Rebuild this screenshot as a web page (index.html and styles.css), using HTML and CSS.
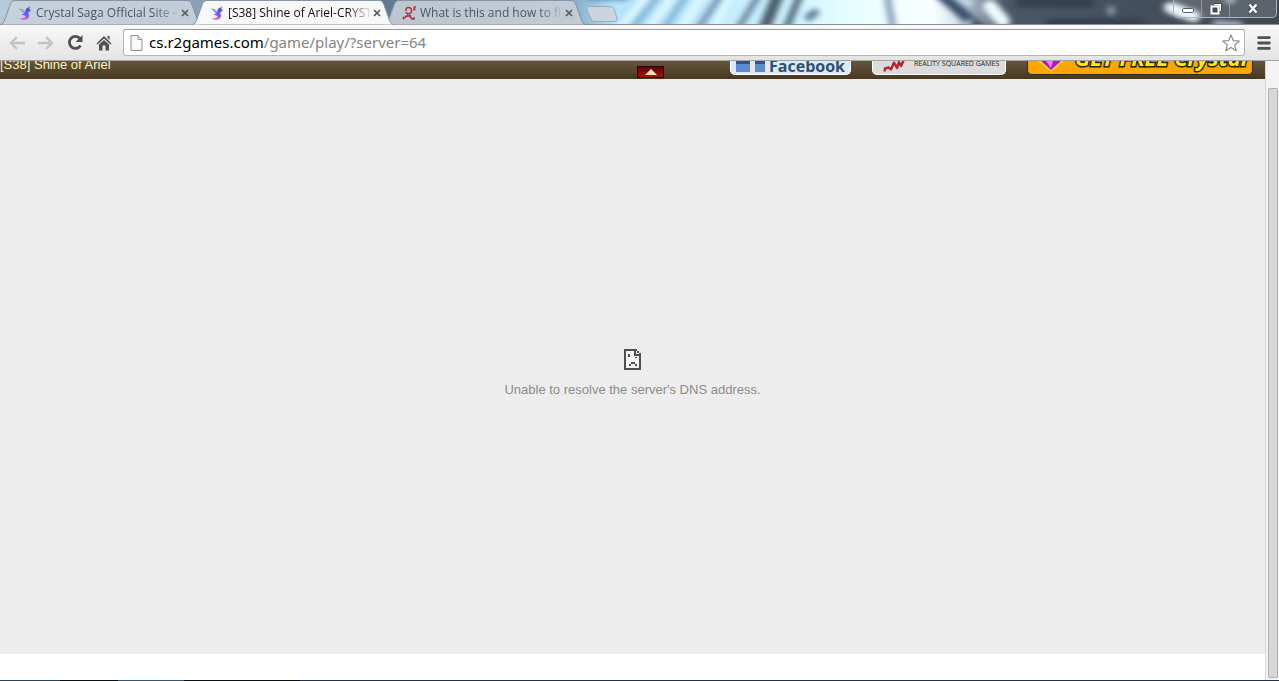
FILE: index.html
```html
<!DOCTYPE html>
<html lang="en">
<head>
<meta charset="utf-8">
<title>[S38] Shine of Ariel-CRYSTAL SAGA</title>
<link rel="stylesheet" href="styles.css">
</head>
<body>
<svg class="defs" width="0" height="0" aria-hidden="true">
  <defs>
    <linearGradient id="wing" x1="0" y1="0" x2="0" y2="1"><stop offset="0" stop-color="#4a45b4"/><stop offset=".5" stop-color="#5a5ff0"/><stop offset="1" stop-color="#d850d8"/></linearGradient>
    <symbol id="saga" viewBox="0 0 14 14"><path fill="#8fa0e0" d="M1 2L5 3.500L8 6L6 7.500L3 5Z"/><path fill="url(#wing)" d="M12.500 0L11 3L13 4L11 6L10 7.500C12.500 9.500 11 13 7 13.500C5 14 3 13.500 1.500 12.500C5 12.500 8 12 7.500 10.500C7 9 4.500 9.500 3 8C5 8.500 6 7.500 7 6.500L8 3C9 2 11 1.500 12.500 0Z"/></symbol>
    <symbol id="cross" viewBox="0 0 8 8"><path d="M1 1L7 7M7 1L1 7" stroke="#5a5a5a" stroke-width="1.7" fill="none"/></symbol>
    <symbol id="tabshape" viewBox="0 0 202 25" preserveAspectRatio="none"><path d="M0 24.500C3 24.500 4 22 5 19L10 5C11 2 12 .5 15 .5H187C190 .5 191 2 192 5L197 19C198 22 199 24.500 202 24.500"/></symbol>
  </defs>
</svg>
<header class="titlebar">
  <svg class="wallpaper" viewBox="0 0 1279 25" preserveAspectRatio="none" aria-hidden="true">
    <defs>
      <linearGradient id="sky" x1="0" x2="1"><stop offset="0" stop-color="#b9cad8"/><stop offset=".15" stop-color="#8aa2b8"/><stop offset=".3" stop-color="#617890"/><stop offset=".45" stop-color="#87b0cd"/><stop offset=".48" stop-color="#b4e2fa"/><stop offset=".62" stop-color="#d0f4ff"/><stop offset=".66" stop-color="#e4fdff"/><stop offset=".73" stop-color="#fafeff"/><stop offset=".745" stop-color="#dbe9f3"/><stop offset=".785" stop-color="#4a5869"/><stop offset="1" stop-color="#3f4752"/></linearGradient>
    </defs>
    <rect width="1279" height="25" fill="url(#sky)"/>
    <g class="streaks" fill="none">
      <path d="M590 -4H625" stroke="#5a82a8" stroke-width="8"/>
      <path d="M630 33L661 -8M662 33L690 -10" stroke="#7fb0d4" stroke-width="6"/>
      <path d="M617 33L650 -8M646 33L676 -8M680 33L704 -10M712 33L732 -10" stroke="#e2fbff" stroke-width="6"/>
      <path d="M696 33L724 -10" stroke="#7090ac" stroke-width="6"/>
      <path d="M736 33L762 -10" stroke="#647f96" stroke-width="6"/>
      <path d="M762 35L780 -10" stroke="#4b5f6e" stroke-width="12"/>
      <path d="M784 35L802 -10" stroke="#4d6577" stroke-width="7"/>
      <path d="M809 18L815 13" stroke="#5d7f96" stroke-width="8"/>
      <path d="M894 35L886 -10" stroke="#7594af" stroke-width="6"/>
      <path d="M936 -10L985 34" stroke="#3a4f6a" stroke-width="11"/>
      <path d="M965 1L969 3" stroke="#c9e7fc" stroke-width="5"/>
      <path d="M990 7L1003 22" stroke="#eefaff" stroke-width="14"/>
      <path d="M964 30L970 22" stroke="#b5d4e9" stroke-width="5"/>
      <path d="M1020 3H1090M1050 24H1140" stroke="#353f4c" stroke-width="9"/>
      <path d="M1111 9V13" stroke="#8fa8b9" stroke-width="6"/>
      <path d="M1170 8L1194 17" stroke="#eef7ff" stroke-width="12"/>
      <path d="M1216 24L1240 26M1228 0H1232" stroke="#afc1d2" stroke-width="6"/>
    </g>
  </svg>
  <nav class="tabs" aria-label="Tabs">
    <div class="tab"><svg class="shape"><use href="#tabshape"/></svg><svg class="fav"><use href="#saga"/></svg><span class="name">Crystal Saga Official Site –</span><button class="close" aria-label="Close tab"><svg><use href="#cross"/></svg></button></div>
    <div class="tab current"><svg class="shape"><use href="#tabshape"/></svg><svg class="fav"><use href="#saga"/></svg><span class="name">[S38] Shine of Ariel-CRYST</span><button class="close" aria-label="Close tab"><svg><use href="#cross"/></svg></button></div>
    <div class="tab third"><svg class="shape"><use href="#tabshape"/></svg><svg class="fav" viewBox="0 0 14 14"><path d="M4 5C3 1 9 0 9.500 4C10 8 5 9 4 6M6 9L3 11.500H1.500V13.500M3 10.500L9 9.500M7 9L10 13H12V11M11.500 1H13L12 3.500H13.500" fill="none" stroke="#b52b3a" stroke-width="1.500"/></svg><span class="name">What is this and how to fix</span><button class="close" aria-label="Close tab"><svg><use href="#cross"/></svg></button></div>
    <button class="newtab" aria-label="New tab"><svg viewBox="0 0 32 16"><path d="M3 .5H24Q27 .5 28 3L31 12Q32 15.500 29 15.500H9Q6 15.500 5 13L1 4Q0 .5 3 .5Z" fill="#c9d6df" stroke="#98abba"/></svg></button>
  </nav>
  <div class="controls">
    <button aria-label="Minimize"><svg viewBox="0 0 14 12"><rect x="1.500" y="5.500" width="11" height="4" rx="1" fill="#fff" stroke="#555d68"/></svg></button>
    <button aria-label="Restore"><svg viewBox="0 0 14 12"><path d="M4.500 .5H12.500V8.500H10V3H4.500Z" fill="#fff" stroke="#444c58"/><path d="M2.500 3.500H9.500V10.500H2.500Z" fill="#444c58" stroke="#fff" stroke-width="2"/></svg></button>
    <button class="wide" aria-label="Close"><svg viewBox="0 0 14 12"><path d="M3.500 1.500L10.500 9.500M10.500 1.500L3.500 9.500" stroke="#444c58" stroke-width="4"/><path d="M3.500 1.500L10.500 9.500M10.500 1.500L3.500 9.500" stroke="#fff" stroke-width="2.400"/></svg></button>
  </div>
</header>
<div class="toolbar">
  <button class="tool" aria-label="Back"><svg viewBox="0 0 18 18"><path d="M17 9H3M9 3L3 9L9 15" fill="none" stroke="#c3c3c3" stroke-width="2.400"/></svg></button>
  <button class="tool" aria-label="Forward"><svg viewBox="0 0 18 18"><path d="M1 9H15M9 3L15 9L9 15" fill="none" stroke="#c3c3c3" stroke-width="2.400"/></svg></button>
  <button class="tool" aria-label="Reload"><svg viewBox="0 0 18 18"><path d="M14 4.500A6 6 0 1 0 14.500 11.500" fill="none" stroke="#505050" stroke-width="2.800"/><path d="M16.500 1V8H9.500Z" fill="#505050"/></svg></button>
  <button class="tool" aria-label="Home"><svg viewBox="0 0 18 18"><path d="M9 2L16.500 9.500L15.500 10.500L9 4.500L2.500 10.500L1.500 9.500ZM12.500 2H14.500V6L12.500 4ZM4 10.500L9 6L14 10.500V16.500H10.500V11.500H7.500V16.500H4Z" fill="#505050"/></svg></button>
  <div class="omnibox">
    <svg class="page" viewBox="0 0 13 16"><path d="M1 .5H8L12 4.500V15.500H1ZM8 .5V4.500H12" fill="#fafafa" stroke="#919191"/></svg>
    <span class="url" role="textbox" aria-label="Address">cs.r2games.com<span>/game/play/?server=64</span></span>
    <button class="star" aria-label="Bookmark this page"><svg viewBox="0 0 18 18"><path d="M9 1L11.300 6.600L17.300 7L12.700 10.900L14.200 16.800L9 13.600L3.800 16.800L5.300 10.900L.7 7L6.700 6.600Z" fill="#fff" stroke="#8b8b8b" stroke-width="1.200" stroke-linejoin="round"/></svg></button>
  </div>
  <button class="menu" aria-label="Menu"><svg viewBox="0 0 13 13"><path d="M1.500 1.500H11.500M1.500 6.500H11.500M1.500 11.500H11.500" stroke="#505050" stroke-width="2.600" stroke-linecap="round"/></svg></button>
</div>
<div class="viewport">
  <main class="content">
    <div class="gamebar">
      <span class="server">[S38] Shine of Ariel</span>
      <button class="toggle" aria-label="Hide bar"><svg viewBox="0 0 12 6"><path d="M6 0L12 6H0Z" fill="#ffe2b0"/></svg></button>
      <div class="badges">
        <a class="badge facebook" href="#"><svg viewBox="0 0 30 12"><path d="M0 0H14V11H0ZM19 0H29V11H19Z" fill="#5b8bd0"/><path d="M0 0H14V3H0ZM19 0H29V3H19Z" fill="#315493"/><path d="M14 0H19V11H14Z" fill="#e8e8e8"/></svg><span>Facebook</span></a>
        <a class="badge reality" href="#"><svg viewBox="0 0 22 12"><path d="M1.500 10.500L2 7.500L6 6.500L8 8.500L11 1.500L14 7L16 1L18 5L20.500 0" fill="none" stroke="#bd2429" stroke-width="2.400" stroke-linejoin="round"/></svg><span>REALITY SQUARED GAMES</span></a>
        <a class="badge crystal" href="#"><svg viewBox="0 0 26 11"><path d="M0 0H26L13 11Z" fill="#ffdf20"/><path d="M3 0H23L13 9Z" fill="#b512d0"/><path d="M8 0H15L13 7Z" fill="#ee7bfa"/></svg><span>GET FREE Crystal</span></a>
      </div>
    </div>
    <section class="error">
      <svg viewBox="0 0 17 21" shape-rendering="crispEdges"><path d="M1 1H11V6H16V20H1Z" fill="#f4f4f4" stroke="#505050" stroke-width="2"/><path d="M11 0H13V2H15V4H17V6H15V4H13V2H11ZM4 5H6V8H4ZM11 8H13V9H11ZM7 13H11V15H7ZM5 15H7V17H5ZM11 15H13V17H11Z" fill="#505050"/></svg>
      <p>Unable to resolve the server's DNS address.</p>
    </section>
    <div class="blank"></div>
  </main>
  <div class="scrollbar"><div class="thumb"></div></div>
</div>
<footer class="taskbar"></footer>
</body>
</html>
```
FILE: styles.css
```css
* { box-sizing: border-box; }
body { margin: 0; height: 100vh; display: flex; flex-direction: column; overflow: hidden; background: #fff; font-family: "Liberation Sans", Arial, sans-serif; }
button { border: 0; margin: 0; padding: 0; background: none; display: flex; align-items: center; justify-content: center; }
svg { display: block; }
.defs, .wallpaper { position: absolute; }

.titlebar { position: relative; flex: none; height: 25px; display: flex; justify-content: space-between; align-items: flex-start; border-bottom: 1px solid #8b8f94; }
.wallpaper { inset: 0; width: 100%; height: 100%; }
.streaks { filter: blur(3px); stroke-linecap: round; }
.tabs { position: relative; display: flex; height: 25px; }
.tab { position: relative; display: flex; align-items: center; width: 202px; height: 25px; padding: 0 11px 0 18px; margin-right: -10px; }
.tab .shape { position: absolute; inset: 0; width: 100%; height: 100%; fill: #c6d1dbe6; stroke: #8794a0; }
.tab.current { z-index: 1; }
.tab.current .shape { fill: #f8f8f8; }
.tab.third .shape { fill: #c8ced7e6; }
.tab .fav { position: relative; flex: none; width: 14px; height: 14px; }
.tab .name { position: relative; flex: 1; min-width: 0; white-space: nowrap; margin: 0 2px 0 4px; font: 12px/24px "Open Sans", "Noto Sans", sans-serif; color: #50555c; mask-image: linear-gradient(90deg, #000 84%, #0002); }
.tab.current .name { color: #111; }
.tab .close { position: relative; flex: none; width: 12px; height: 12px; }
.close svg { width: 8px; height: 8px; }
.newtab { align-self: center; margin: 2px 0 0 10px; }
.newtab svg { width: 32px; height: 16px; }
.controls { position: relative; display: flex; height: 18px; margin-right: 2px; border: 1px solid #aab4c0; border-top: 0; border-radius: 0 0 5px 5px; background: #ffffff26; }
.controls button { width: 28px; border-right: 1px solid #8d97a4; }
.controls .wide { width: 46px; border-right: 0; }
.controls svg { width: 14px; height: 12px; }

.toolbar { flex: none; height: 36px; display: flex; align-items: center; padding: 0 8px; background: linear-gradient(#f8f8f8, #e4e4e4); border-bottom: 1px solid #a3a3a3; }
.tool { width: 18px; height: 18px; margin-right: 11px; }
.tool svg { width: 18px; height: 18px; }
.omnibox { flex: 1; display: flex; align-items: center; height: 27px; margin-left: -1px; padding: 0 4px 0 6px; background: #fff; border: 1px solid #b6b6b6; border-top-color: #999; border-radius: 3px; }
.page { width: 13px; height: 16px; }
.url { flex: 1; margin-left: 6px; padding-bottom: 2px; font: 15px/22px "Noto Sans", "Open Sans", sans-serif; color: #000; }
.url span { color: #848484; }
.star svg { width: 18px; height: 18px; }
.menu { margin-left: 12px; }
.menu svg { width: 14px; height: 14px; }

.viewport { flex: 1; min-height: 0; display: flex; }
.content { flex: 1; display: flex; flex-direction: column; }
.gamebar { flex: none; height: 18px; display: grid; grid-template-columns: 1fr auto 1fr; overflow: hidden; background: linear-gradient(#665539, #463822); }
.server { font-size: 13px; line-height: 16px; margin-top: -4px; color: #fff3bd; }
.toggle { align-self: end; width: 27px; height: 12px; margin: 0 0 1px 36px; background: linear-gradient(#5e0505, #a81010); border: 1px solid #280404; }
.toggle svg { width: 12px; height: 6px; }
.badges { display: flex; justify-content: flex-end; align-items: flex-start; padding-right: 12px; }
.badge { display: flex; align-items: flex-start; height: 14px; overflow: hidden; text-decoration: none; white-space: nowrap; border: 1px solid #fff; border-top: 0; border-radius: 0 0 5px 5px; }
.badge svg { flex: none; }
.facebook { width: 121px; padding-left: 5px; margin-right: 21px; background: #dce9f7; color: #2d4e75; font: bold 16px/20px "Open Sans", sans-serif; }
.facebook svg { width: 30px; height: 12px; margin-right: 3px; }
.facebook span { margin-top: -5px; }
.reality { width: 134px; padding-left: 10px; margin-right: 21px; background: #dcdcdc; color: #252525; font: 7px/8px "Open Sans", sans-serif; }
.reality svg { width: 22px; height: 12px; margin-right: 9px; }
.reality span { margin-top: -1px; }
.crystal { width: 226px; padding-left: 10px; background: #faa500; border-color: #33270f; color: #ffed00; font: italic bold 22px/24px "Open Sans", sans-serif; -webkit-text-stroke: 3px #27270c; paint-order: stroke fill; }
.crystal svg { width: 26px; height: 11px; margin-right: 11px; }
.crystal span { margin-top: -16px; }
.error { flex: 1; display: flex; flex-direction: column; align-items: center; justify-content: center; padding-top: 14px; background: #ededed; color: #8b8b8b; font-size: 13px; line-height: 16px; }
.error svg { width: 17px; height: 21px; }
.error p { margin: 12px 0 0; }
.blank { flex: none; height: 26px; background: #fff; }
.scrollbar { flex: none; width: 14px; padding: 27px 1px 2px 2px; background: #f3f3f3; border-left: 1px solid #d7d7d7; }
.thumb { height: 100%; background: #d7d7d7; border: 1px solid #b0b0b0; border-radius: 2px; }
.taskbar { flex: none; height: 1px; background: linear-gradient(90deg, #2c4252 0 60px, #0b1014 60px 118px, #3b5568 118px 184px, #0b1014 184px 300px, #243342 300px); }
```
